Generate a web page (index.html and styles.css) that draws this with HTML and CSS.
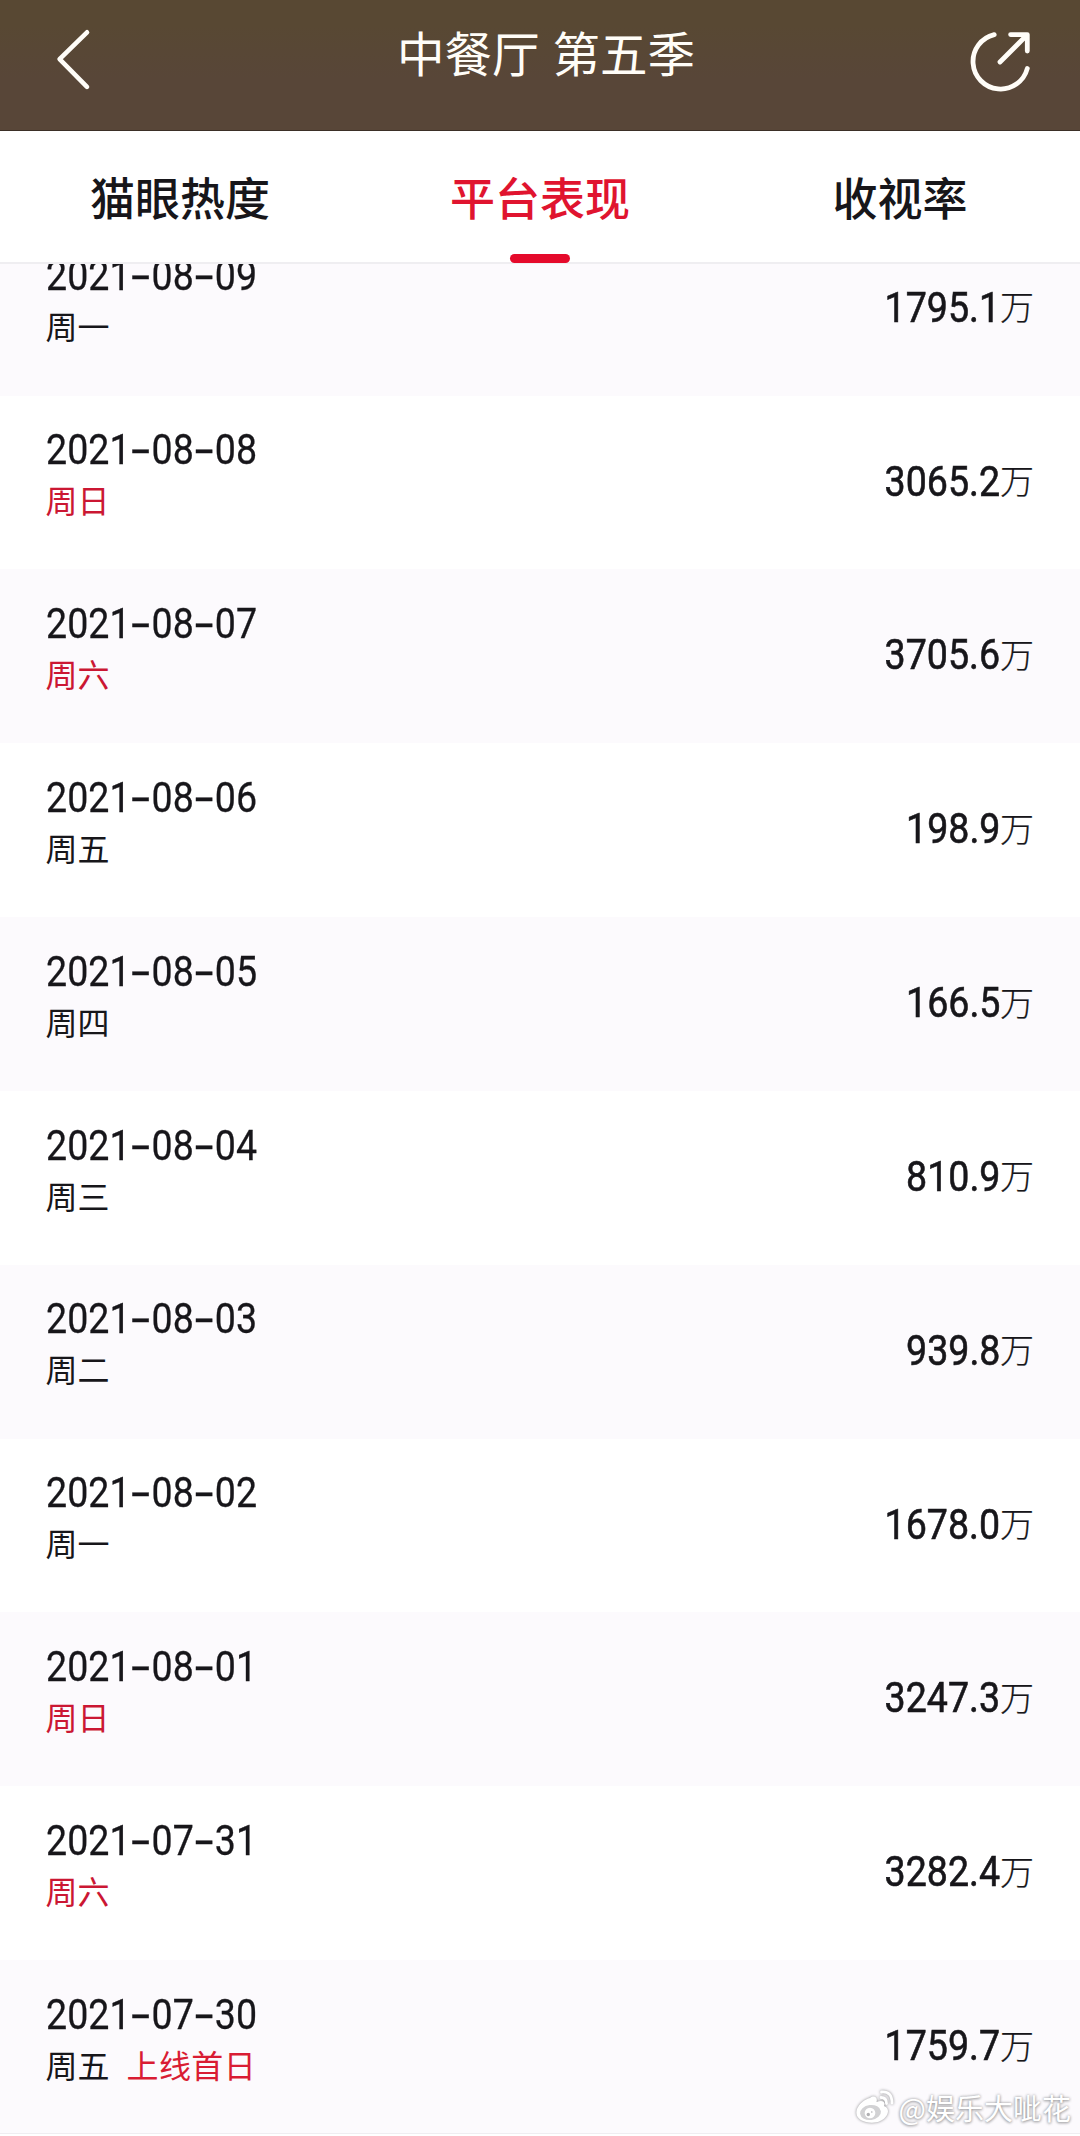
FILE: index.html
```html
<!DOCTYPE html>
<html lang="zh-CN">
<head>
<meta charset="utf-8">
<title>中餐厅 第五季</title>
<link rel="stylesheet" href="styles.css">
</head>
<body>
<div class="app">
  <header class="bar">
    <svg class="back" viewBox="0 0 40 66" fill="none" stroke="currentColor" stroke-width="4.6" stroke-linecap="round" stroke-linejoin="round"><path d="M35 6.300 7.600 33.200 35 60.800"/></svg>
    <h1 class="title">中餐厅 第五季</h1>
    <svg class="share" viewBox="0 0 64 64" fill="none" stroke="currentColor" stroke-width="4.800" stroke-linecap="round" stroke-linejoin="round"><path d="M26.200 4.600A27.600 27.600 0 1 0 59.300 38.500"/><path d="M32 32 59 5M42.600 4.600H59.300V21"/></svg>
  </header>
  <nav class="tabs">
    <a class="tab">猫眼热度</a>
    <a class="tab active">平台表现</a>
    <a class="tab">收视率</a>
  </nav>
  <main class="list" id="list"></main>
  <div class="watermark">
    <svg class="weibo" viewBox="0 0 38 34"><path class="body" d="M15 8C19 5 23 7 21.500 12C27 9.500 31 11.500 29 16C33 17.500 34 21 32 25C28 32 19 34 11 32C3 30 0 25 2 19C4 14 10 9 15 8Z"/><ellipse class="eye" cx="15.500" cy="22.500" rx="10.500" ry="7.500" transform="rotate(-7 15.500 22.500)"/><circle class="pupil" cx="15" cy="23" r="5.300"/><circle class="dot" cx="13.300" cy="24.500" r="1.700"/><circle class="dot" cx="16.800" cy="22" r=".8"/><path class="wave" d="M26.500 2Q37 1 37 13M26 7.500Q31.500 7.500 31.500 13.500"/></svg>
    <span>@娱乐大呲花</span>
  </div>
</div>
<script src="app.js"></script>
</body>
</html>
```
FILE: styles.css
```css
* { box-sizing: border-box; }
body {
  margin: 0;
  background: #fff;
  color: #17161a;
  font-family: "Noto Sans CJK SC", sans-serif;
}
.app {
  position: relative;
  display: flex;
  flex-direction: column;
  width: 1080px;
  height: 2136px;
  overflow: hidden;
}
.bar {
  display: flex;
  justify-content: space-between;
  flex: none;
  height: 131px;
  padding: 0 48px 0 52px;
  color: #fffdf8;
  background: linear-gradient(#584833 20%, #584638 60%);
  border-bottom: 1px solid #3b2f27;
}
.back { width: 40px; height: 66px; margin-top: 26px; }
.share { width: 64px; height: 64px; margin-top: 30px; }
.title {
  margin: 0 0 0 32px;
  font-size: 47.5px;
  font-weight: 400;
  line-height: 60px;
  padding-top: 22px;
  word-spacing: 2.500px;
}
.tabs {
  display: flex;
  flex: none;
  height: 133px;
  background: #fff;
  border-bottom: 2px solid #efeef1;
}
.tab {
  display: flex;
  flex-direction: column;
  align-items: center;
  justify-content: space-between;
  flex: 1;
  padding-top: 35px;
  font-size: 45px;
  font-weight: 500;
  line-height: 62px;
}
.active { color: #e0142f; }
.active::after {
  content: "";
  width: 60px;
  height: 9px;
  margin-bottom: -1px;
  border-radius: 4.500px;
  background: #e50a2b;
}
.list {
  display: flex;
  flex: 1;
  flex-direction: column;
  justify-content: flex-end;
  min-height: 0;
  padding-bottom: 2px;
  overflow: hidden;
}
.row {
  display: flex;
  justify-content: space-between;
  flex: none;
  height: 173.850px;
  padding: 0 46px;
}
.row:nth-child(odd) { background: #fcfafd; }
.row:last-child { border-bottom: 1px solid #efedf1; }
.when { padding-top: 33.600px; }
.date, .num {
  font-family: Roboto, "Noto Sans CJK SC", sans-serif;
  font-size: 42px;
  line-height: 42px;
  -webkit-text-stroke: .3px currentColor;
}
.date { transform: scaleX(.895); transform-origin: left; white-space: nowrap; }
.dash { display: inline-block; width: 23.500px; text-align: center; transform: scale(1.800, 1.100); }
.day {
  display: flex;
  gap: 17px;
  margin: 7px 0 0 -.5px;
  font-size: 32px;
  line-height: 42px;
}
.premiere { letter-spacing: .4px; }
.weekend { color: #cb1733; }
.premiere { color: #d91c33; }
.value { display: flex; align-items: baseline; padding-top: 65px; line-height: 42px; }
.num { -webkit-text-stroke-width: .6px; transform: scaleX(.895); transform-origin: right; }
.unit { position: relative; top: -1.500px; font-size: 34px; font-weight: 300; -webkit-text-stroke: .2px currentColor; }
.watermark {
  position: absolute;
  right: 9px;
  bottom: 9px;
  display: flex;
  align-items: center;
  gap: 6px;
  color: #fff;
  font-size: 29px;
  line-height: 40px;
  text-shadow: 0 0 3px #98989b, 0 1px 3px #a5a5a8;
}
.weibo { width: 38px; height: 34px; overflow: visible; filter: drop-shadow(0 0 1.500px #88888b); }
.body, .pupil { fill: #fff; }
.eye { fill: #d2d2d4; }
.dot { fill: #b0b0b3; }
.wave { fill: none; stroke: #fff; stroke-width: 2.800; stroke-linecap: round; }
```
FILE: app.js
```js
const rows = [
  ["2021-08-09", "周一", "1795.1"],
  ["2021-08-08", "周日", "3065.2"],
  ["2021-08-07", "周六", "3705.6"],
  ["2021-08-06", "周五", "198.9"],
  ["2021-08-05", "周四", "166.5"],
  ["2021-08-04", "周三", "810.9"],
  ["2021-08-03", "周二", "939.8"],
  ["2021-08-02", "周一", "1678.0"],
  ["2021-08-01", "周日", "3247.3"],
  ["2021-07-31", "周六", "3282.4"],
  ["2021-07-30", "周五", "1759.7", "上线首日"],
];

document.getElementById("list").innerHTML = rows.map(([date, day, value, note]) => {
  const weekend = day === "周六" || day === "周日" ? "weekend" : "";
  return `<div class="row">
    <div class="when">
      <div class="date">${date.replaceAll("-", '<span class="dash">-</span>')}</div>
      <div class="day"><span class="${weekend}">${day}</span>${note ? `<span class="premiere">${note}</span>` : ""}</div>
    </div>
    <div class="value"><span class="num">${value}</span><span class="unit">万</span></div>
  </div>`;
}).join("");
```
